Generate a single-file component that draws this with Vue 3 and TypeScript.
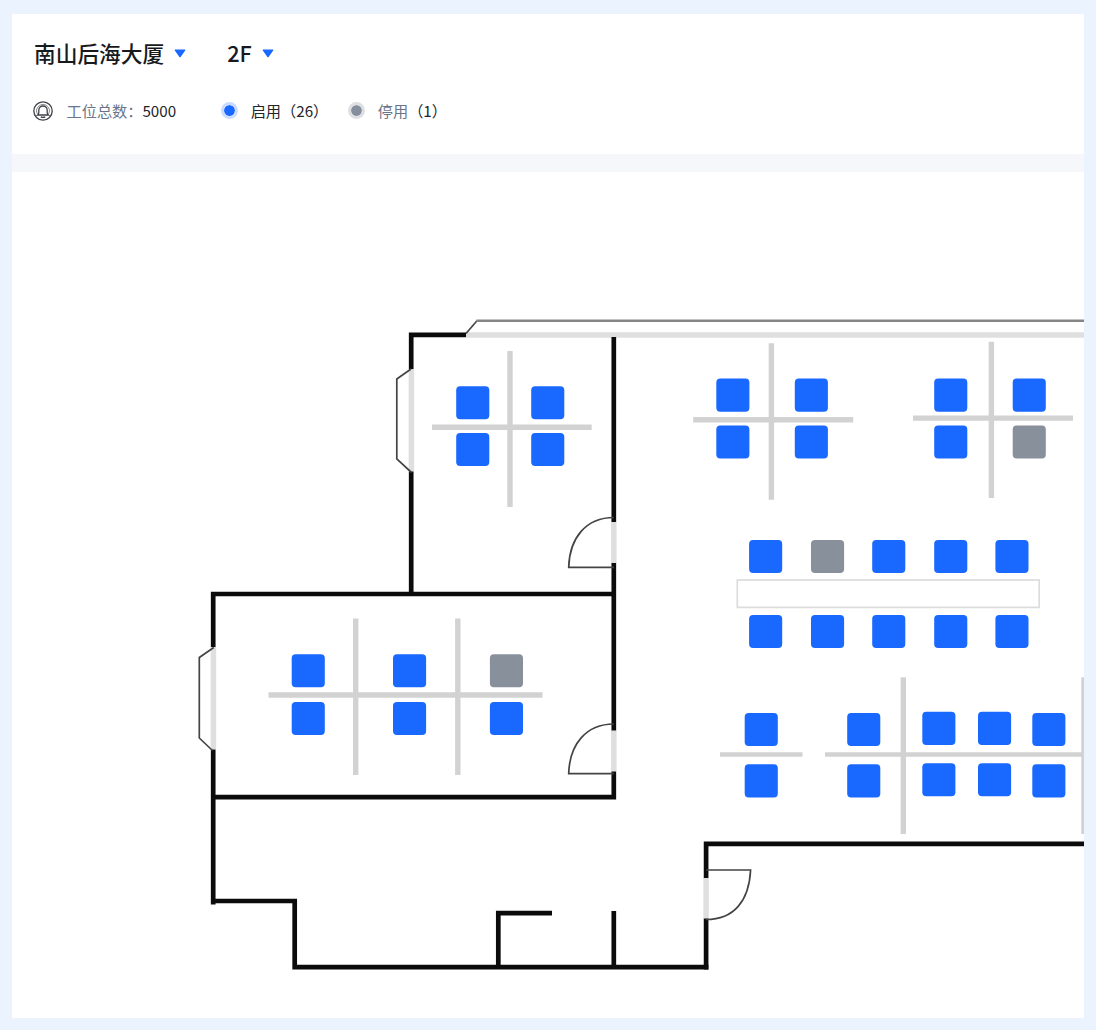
<script setup lang="ts">
type Seat = { x: number; y: number; off?: boolean }

const cols = (xs: number[], ys: number[], off: string[] = []): Seat[] =>
  ys.flatMap((y, r) => xs.map((x, c) => ({ x, y, off: off.includes(`${r}-${c}`) })))

const seats: Seat[] = [
  ...cols([456.2, 531.2], [386.2, 433]),
  ...cols([291.7, 393, 489.9], [654.2, 702], ['0-2']),
  ...cols([716.3, 794.8], [378.6, 425.4]),
  ...cols([934.2, 1012.7], [378.6, 425.4], ['1-1']),
  ...cols([749.1, 811, 872.2, 934.2, 995.4], [540, 615], ['0-1']),
  ...cols([744.7, 847.2, 1032.3], [713, 764.3]),
  ...cols([922.3, 978], [711.8, 763.2]),
]

const walls = [
  'M466 334.9H411.2V369',
  'M411.2 471.5V594',
  'M613.8 337V522',
  'M613.8 563V730.5',
  'M613.8 771.5V797.2H213.2',
  'M613.8 594H213.2V647',
  'M213.2 749.5V904.5',
  'M213.2 901H294.7V967.2H708.4',
  'M706.1 969.5V918.5',
  'M706.1 878V843.8H1084',
  'M498.3 967V913.1H552',
  'M613.8 967V911',
]

const openings = [
  'M466 334.9H1084',
  'M411.4 369V471.5',
  'M613.8 522V563',
  'M613.8 730.5V771.5',
  'M213.4 647V749.5',
  'M706.1 878V918.5',
]

const outlines = [
  'M411 369L396.8 379V459L411.5 472.5',
  'M213.8 647.5L199.3 657.5V738L212.5 750.5',
  'M613.8 517.5C586 517.5 569.5 538 568.7 567.4H613.8',
  'M613.8 724C586 724 569.5 744.5 568.7 773.7H613.8',
  'M706.1 870H750.6C749 901 734 919.5 706.1 919.5',
]

const dividers = [
  'M510 351V507M432 427.3H591.7',
  'M355.7 618.5V775M457.8 618.5V775M268.5 695H542.5',
  'M771.4 343.3V499.8M693.2 419.7H853.2',
  'M991.4 341.7V498M913 418.1H1073',
  'M903.3 677.3V834M1084 677.3V834',
]
</script>

<template>
  <div class="page">
    <main class="panel">
      <header class="head">
        <div class="selectors">
          <div class="select">
            <span>南山后海大厦</span>
            <svg class="caret" viewBox="0 0 12 9"><path d="M1.2.5h9.6q1 0 .4.9L6.8 7.7q-.8 1-1.6 0L.8 1.4Q.2.5 1.2.5z" /></svg>
          </div>
          <div class="select floor">
            <span>2F</span>
            <svg class="caret" viewBox="0 0 12 9"><path d="M1.2.5h9.6q1 0 .4.9L6.8 7.7q-.8 1-1.6 0L.8 1.4Q.2.5 1.2.5z" /></svg>
          </div>
        </div>
        <div class="stats">
          <svg class="bell" viewBox="0 0 20 20">
            <circle cx="10" cy="10" r="9.2" />
            <path d="M4.7 13.3A6.3 6.3 0 1 1 15.3 13.3" class="ring" />
            <path d="M4.6 14q1.2-.8 1.2-2.6V9.2a4.2 4.2 0 0 1 8.4 0v2.2q0 1.8 1.2 2.6z" />
            <path d="M7.8 15.9q2.2 1 4.4 0" />
          </svg>
          <span class="muted total">工位总数：</span><span>5000</span>
          <i class="dot on"></i>
          <span class="enabled">启用（26）</span>
          <i class="dot off"></i>
          <span><span class="muted">停用</span>（1）</span>
        </div>
      </header>
      <div class="band"></div>
      <svg class="plan" viewBox="12 172 1072 846" width="1072" height="846">
        <path v-for="d in openings" :key="d" :d="d" class="opening" />
        <path d="M466 333.5L477 320.8" class="outline" />
        <path d="M476.4 320.8H1084" class="bay" />
        <path v-for="d in dividers" :key="d" :d="d" class="divider" />
        <path d="M720 754.6H802.5M825 754.6H1084" class="divider thin" />
        <path v-for="d in walls" :key="d" :d="d" class="wall" />
        <path v-for="d in outlines" :key="d" :d="d" class="outline" />
        <rect x="737.3" y="580" width="301.9" height="27.4" class="table" />
        <rect
          v-for="(s, i) in seats"
          :key="i"
          :x="s.x"
          :y="s.y"
          width="33.1"
          height="33.1"
          rx="4"
          :class="s.off ? 'seat disabled' : 'seat'"
        />
      </svg>
    </main>
  </div>
</template>

<style>
body {
  margin: 0;
  background: #ebf3ff;
}
</style>

<style scoped>
.page {
  box-sizing: border-box;
  width: 1096px;
  height: 1030px;
  padding: 14px 12px 12px;
  background: #ebf3ff;
  font-family: "Noto Sans CJK SC", sans-serif;
  color: #222428;
}
.panel {
  height: 1004px;
  background: #fff;
  overflow: hidden;
}
.head {
  box-sizing: border-box;
  height: 140px;
  padding: 23px 22px 0;
}
.selectors,
.select,
.stats {
  display: flex;
  align-items: center;
}
.selectors {
  height: 32px;
  font-size: 21.7px;
  line-height: 32px;
  font-weight: 500;
  color: #17191c;
}
.floor {
  margin-left: 41px;
}
.caret {
  width: 12px;
  height: 9px;
  margin-left: 10px;
  fill: #1968ff;
}
.stats {
  height: 24px;
  margin-top: 29px;
  margin-left: -1px;
  font-size: 15.2px;
  line-height: 24px;
  white-space: nowrap;
}
.bell {
  width: 20px;
  height: 20px;
  margin-top: 1px;
  fill: none;
  stroke: #3f4247;
  stroke-width: 1.3;
}
.bell .ring {
  stroke-width: 0.6;
}
.total {
  margin-left: 13.5px;
}
.muted {
  color: #68758b;
}
.dot {
  width: 11px;
  height: 11px;
  margin-top: 1px;
  border: 3px solid;
  border-radius: 50%;
  background-clip: padding-box;
}
.on {
  margin-left: 44.5px;
  margin-right: 13px;
  background-color: #1968ff;
  border-color: #c9dcff;
}
.off {
  margin-left: 19.5px;
  margin-right: 13px;
  background-color: #868f9d;
  border-color: #dddfe2;
}
.band {
  height: 18px;
  background: #f5f7fa;
}
.plan {
  display: block;
}
.plan path {
  fill: none;
}
.wall {
  stroke: #0b0b0b;
  stroke-width: 4.7;
}
.opening {
  stroke: #dfdfdf;
  stroke-width: 5.5;
}
.outline {
  stroke: #444;
  stroke-width: 1.7;
}
.bay {
  stroke: #858585;
  stroke-width: 2.5;
}
.divider {
  stroke: #d2d2d2;
  stroke-width: 5.4;
}
.divider.thin {
  stroke-width: 4.5;
}
.table {
  fill: #fff;
  stroke: #dcdcdc;
  stroke-width: 1.7;
}
.seat {
  fill: #1968ff;
}
.disabled {
  fill: #88909c;
}
</style>
